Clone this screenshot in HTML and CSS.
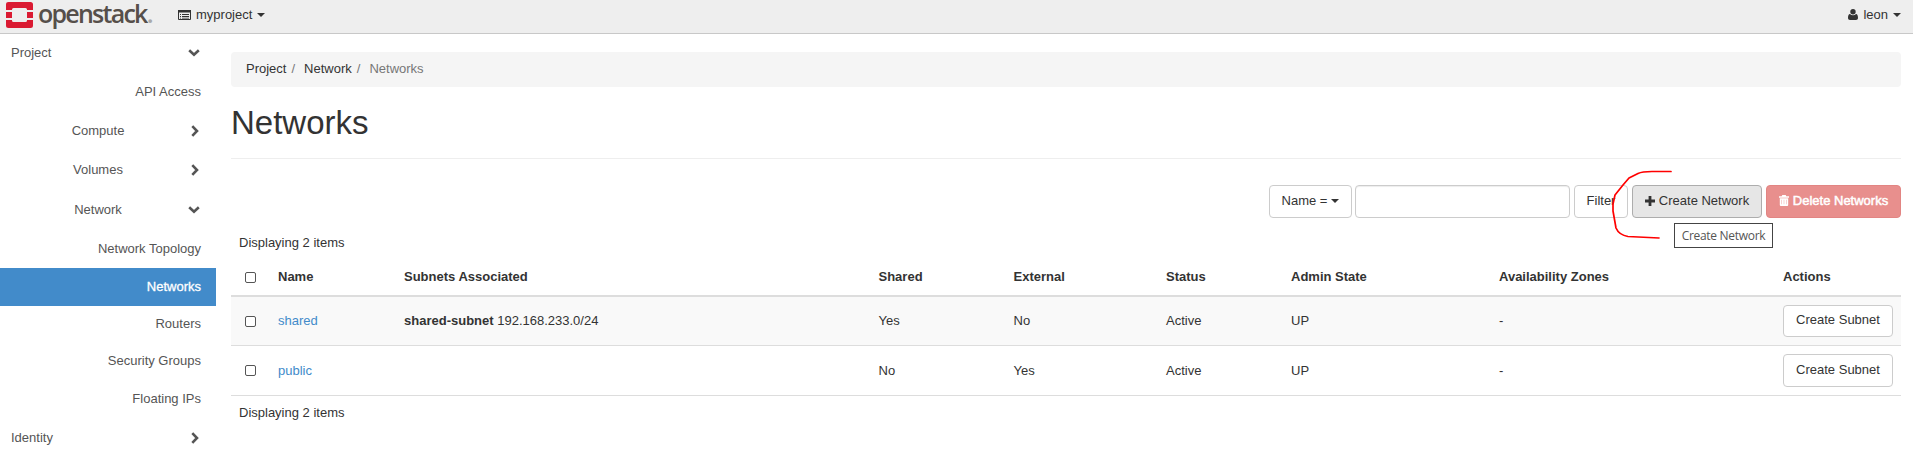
FILE: index.html
```html
<!DOCTYPE html>
<html lang="en">
<head>
<meta charset="utf-8">
<title>Networks - OpenStack Dashboard</title>
<link rel="stylesheet" href="styles.css">
</head>
<body>
<header class="topbar">
  <div class="brand">
    <svg class="brand-mark" width="27" height="26" viewBox="0 0 27 26">
      <g fill="#da1a32">
        <path d="M2.500 0h22a2.500 2.500 0 0 1 2.500 2.500V8h-6V7.500a1.500 1.500 0 0 0-1.500-1.500h-12A1.500 1.500 0 0 0 6 7.500V8H0V2.500A2.500 2.500 0 0 1 2.500 0z"/>
        <path d="M0 10h6v6H0zM21 10h6v6h-6z"/>
        <path d="M0 18h6v.5A1.500 1.500 0 0 0 7.500 20h12a1.500 1.500 0 0 0 1.500-1.500V18h6v5.500a2.500 2.500 0 0 1-2.500 2.500h-22A2.500 2.500 0 0 1 0 23.500z"/>
      </g>
    </svg>
    <span class="brand-name">openstack<span class="brand-dot">.</span></span>
  </div>
  <div class="project-menu">
    <svg width="13" height="10" viewBox="0 0 13 10"><path fill="none" stroke="#333" d="M.5 .5h12v9H.5z"/><path fill="#333" d="M0 0h13v2.500H0zM2 4h1v1H2zM4 4h7v1H4zM2 6h1v1H2zM4 6h7v1H4zM2 7.800h1v.7H2zM4 7.800h7v.7H4z"/></svg>
    <span>myproject</span><i class="caret"></i>
  </div>
  <div class="user-menu">
    <svg width="10" height="11" viewBox="0 0 10 11"><circle cx="5" cy="2.700" r="2.700" fill="#333"/><path fill="#333" d="M2 5C.5 5 0 7 0 9c0 1.300.8 2 2 2h6c1.200 0 2-.7 2-2 0-2-.5-4-2-4-.8.8-1.800 1.200-3 1.200S2.800 5.800 2 5z"/></svg>
    <span>leon</span><i class="caret"></i>
  </div>
</header>
<div class="layout">
  <nav class="sidebar">
    <a class="item group h38"><span>Project</span><svg class="chev" width="12" height="8" viewBox="0 0 12 8"><path d="M1.200 1.300L6 5.800l4.800-4.500"/></svg></a>
    <a class="item leaf">API Access</a>
    <a class="item sub"><span>Compute</span><svg class="chev side" width="8" height="12" viewBox="0 0 8 12"><path d="M1.300 1.200L6 6l-4.700 4.800"/></svg></a>
    <a class="item sub h40"><span>Volumes</span><svg class="chev side" width="8" height="12" viewBox="0 0 8 12"><path d="M1.300 1.200L6 6l-4.700 4.800"/></svg></a>
    <a class="item sub"><span>Network</span><svg class="chev" width="12" height="8" viewBox="0 0 12 8"><path d="M1.200 1.300L6 5.800l4.800-4.500"/></svg></a>
    <a class="item leaf">Network Topology</a>
    <a class="item leaf active h38">Networks</a>
    <a class="item leaf h36">Routers</a>
    <a class="item leaf h38">Security Groups</a>
    <a class="item leaf h38">Floating IPs</a>
    <a class="item group"><span>Identity</span><svg class="chev side" width="8" height="12" viewBox="0 0 8 12"><path d="M1.300 1.200L6 6l-4.700 4.800"/></svg></a>
  </nav>
  <main class="content">
    <ol class="breadcrumb"><li>Project</li><li>Network</li><li class="current">Networks</li></ol>
    <h1>Networks</h1>
    <div class="toolbar">
      <button class="btn name-btn">Name = <i class="caret"></i></button>
      <input class="search" type="text">
      <button class="btn filter-btn">Filter</button>
      <button class="btn create-btn"><svg width="10" height="10" viewBox="0 0 10 10"><path fill="#333" d="M3.600 0h2.800v3.600H10v2.800H6.400V10H3.600V6.400H0V3.600h3.600z"/></svg>Create Network</button>
      <button class="btn delete-btn"><svg width="10" height="11" viewBox="0 0 10 11"><path fill="#fff" fill-rule="evenodd" d="M3.300 0h3.400l.6 1.300H10v1.500H0V1.300h2.700zM.8 3.300h8.400V10a1 1 0 0 1-1 1H1.800a1 1 0 0 1-1-1zM2.600 4.800V9.300h.4V4.800zM4.800 4.800V9.300h.4V4.800zM7 4.800V9.300h.4V4.800z"/></svg>Delete Networks</button>
      <div class="tooltip">Create Network</div>
      <svg class="mark" width="64" height="72" viewBox="0 0 64 72"><path d="M60 3.500H41Q31 3.500 27 5.500L18 10 12 17 4 27 2 36V43L5 60Q8 67 17 68.500L48 70"/></svg>
    </div>
    <div class="count">Displaying 2 items</div>
    <table class="grid">
      <colgroup><col class="c1"><col class="c2"><col class="c3"><col class="c4"><col class="c5"><col class="c6"><col class="c7"><col class="c8"><col class="c9"></colgroup>
      <thead><tr><th><i class="box"></i></th><th>Name</th><th>Subnets Associated</th><th>Shared</th><th>External</th><th>Status</th><th>Admin State</th><th>Availability Zones</th><th>Actions</th></tr></thead>
      <tbody>
        <tr class="odd"><td><i class="box"></i></td><td><a>shared</a></td><td><b>shared-subnet</b> 192.168.233.0/24</td><td>Yes</td><td>No</td><td>Active</td><td>UP</td><td>-</td><td><button class="btn row-btn">Create Subnet</button></td></tr>
        <tr class="even"><td><i class="box"></i></td><td><a>public</a></td><td></td><td>No</td><td>Yes</td><td>Active</td><td>UP</td><td>-</td><td><button class="btn row-btn">Create Subnet</button></td></tr>
      </tbody>
    </table>
    <div class="count foot">Displaying 2 items</div>
  </main>
</div>
</body>
</html>
```
FILE: styles.css
```css
* { box-sizing: border-box; }
body {
  margin: 0;
  height: 450px;
  overflow: hidden;
  background: #fff;
  color: #333;
  font: 13px/18px "Liberation Sans", Arial, sans-serif;
}
svg { display: block; flex: none; }
.caret {
  display: inline-block;
  border: 4px solid transparent;
  border-top-color: #333;
  border-bottom: 0;
}
.topbar {
  display: flex;
  height: 34px;
  background: #eee;
  border-bottom: 1px solid #c8c8c8;
}
.brand { display: flex; width: 178px; padding-left: 6px; }
.brand-mark { margin-top: 2px; }
.brand-name {
  margin-left: 5px;
  font: 600 25px/27px "Open Sans", sans-serif;
  letter-spacing: -1.750px;
  color: #564f4a;
}
.brand-dot { color: #aaa; }
.project-menu, .user-menu { display: flex; align-items: center; height: 29px; }
.project-menu span { margin: 0 5px; }
.user-menu { margin-left: auto; padding-right: 12px; }
.user-menu span { margin: 0 5px; }
.layout { display: flex; }
.sidebar { width: 216px; flex: none; color: #555; }
.item {
  display: flex;
  align-items: center;
  justify-content: space-between;
  height: 39px;
  padding: 0 16px 0 11px;
}
.leaf { justify-content: flex-end; padding-right: 15px; }
.sub span { width: 104px; margin-left: 35px; text-align: center; }
.h36 { height: 36px; }
.h38 { height: 38px; }
.h40 { height: 40px; }
.active { background: #428bca; color: #fff; -webkit-text-stroke: 0.3px #fff; }
.chev { fill: none; stroke: #555; stroke-width: 2.600; }
.side { margin-right: 1px; }
.content { flex: 1; min-width: 0; padding: 18px 12px 0 15px; }
.breadcrumb {
  display: flex;
  height: 35px;
  margin: 0;
  padding: 8px 15px;
  list-style: none;
  border-radius: 4px;
  background: #f5f5f5;
}
.breadcrumb li + li::before { content: "/"; padding: 0 9px 0 5px; color: #777; }
.breadcrumb .current { color: #777; }
h1 {
  height: 72px;
  margin: 0;
  padding-top: 17px;
  border-bottom: 1px solid #eee;
  font-size: 33px;
  line-height: 37px;
  font-weight: 400;
}
.toolbar {
  position: relative;
  display: flex;
  justify-content: flex-end;
  margin-top: 26px;
  height: 33px;
}
.btn {
  display: flex;
  align-items: center;
  justify-content: center;
  height: 33px;
  padding: 0 0 2px;
  border: 1px solid #ccc;
  border-radius: 4px;
  background: #fff;
  color: #333;
  font: inherit;
}
.name-btn { width: 83px; gap: 4px; }
.search {
  width: 215px;
  margin: 0 4px 0 3px;
  border: 1px solid #ccc;
  border-radius: 4px;
  box-shadow: inset 0 1px 1px rgba(0, 0, 0, .075);
}
.filter-btn { width: 54px; }
.create-btn { width: 130px; margin: 0 4px; gap: 4px; background: #e6e6e6; border-color: #adadad; }
.delete-btn { width: 135px; gap: 4px; background: #e88f8d; border-color: #e28583; color: #fff; -webkit-text-stroke: 0.5px #fff; }
.tooltip {
  position: absolute;
  left: 1443px;
  top: 38px;
  width: 99px;
  height: 25px;
  border: 1px solid #444;
  background: #fff;
  color: #555;
  font: 12px/23px "Open Sans", sans-serif;
  letter-spacing: -0.300px;
  text-align: center;
  white-space: nowrap;
}
.mark { position: absolute; left: 1380px; top: -17px; fill: none; stroke: #f00; stroke-width: 1.700; stroke-linecap: round; stroke-linejoin: round; }
.count { margin: 16px 0 0 8px; height: 18px; }
.foot { margin-top: 8px; }
.grid { width: 1670px; margin-top: 8px; table-layout: fixed; border-collapse: separate; border-spacing: 0; }
.grid th, .grid td { padding: 0 8px; text-align: left; vertical-align: middle; }
.grid th { height: 37px; border-bottom: 2px solid #ddd; padding-bottom: 1px; }
.grid td { border-bottom: 1px solid #ddd; }
.grid th:first-child, .grid td:first-child { padding-left: 14px; }
.odd td { height: 49px; background: #f9f9f9; }
.even td { height: 50px; }
.grid a { color: #428bca; }
.c1 { width: 39px; }
.c2 { width: 126px; }
.c3 { width: 474.500px; }
.c4 { width: 135px; }
.c5 { width: 152.500px; }
.c6 { width: 125px; }
.c7 { width: 208px; }
.c8 { width: 284px; }
.c9 { width: 126px; }
.box { display: block; width: 11px; height: 11px; border: 1px solid #555; border-radius: 2px; background: #fff; }
.row-btn { width: 110px; }
.odd .row-btn { height: 32px; }
```
